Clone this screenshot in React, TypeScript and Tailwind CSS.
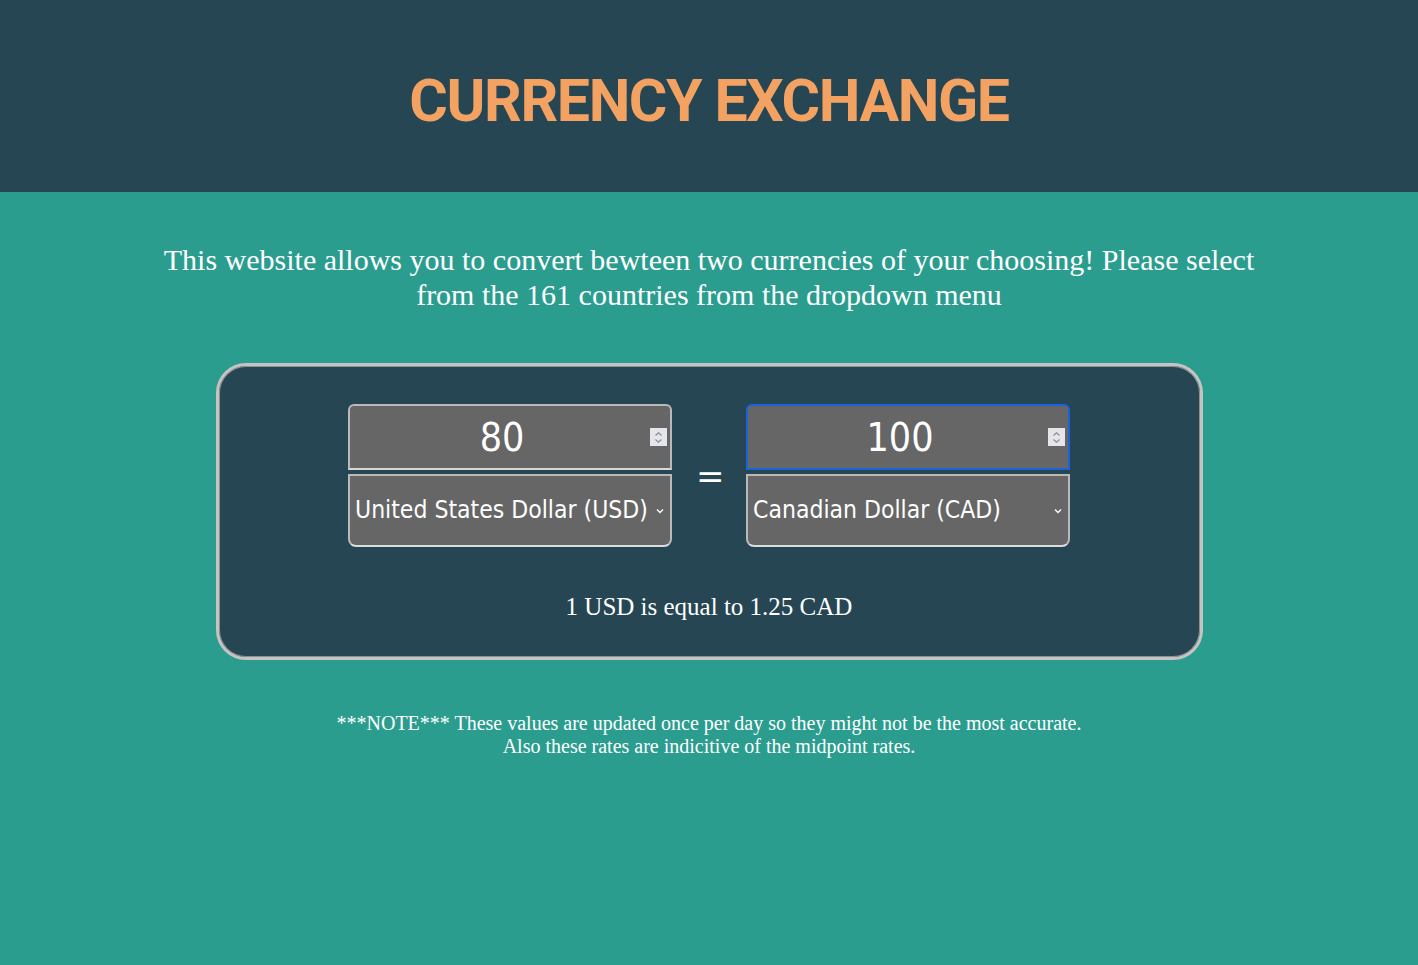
import { useState } from "react";

const currencies = [
  { code: "USD", name: "United States Dollar" },
  { code: "CAD", name: "Canadian Dollar" },
];

const Spinner = () => (
  <span className="absolute right-[3px] top-1/2 -translate-y-1/2 w-[17px] h-[18px] bg-[#e5e5ec] flex items-center justify-center pointer-events-none">
    <svg width="9" height="13" viewBox="0 0 9 13" fill="none" stroke="#8a8a96" strokeWidth="1.2">
      <path d="M1.5 4.5 L4.5 1.8 L7.5 4.5" />
      <path d="M1.5 8.5 L4.5 11.2 L7.5 8.5" />
    </svg>
  </span>
);

const Chevron = () => (
  <svg className="absolute right-[6px] top-1/2 -translate-y-1/2 pointer-events-none" width="8" height="6" viewBox="0 0 8 6" fill="none" stroke="#ffffff" strokeWidth="1.3">
    <path d="M1 1.5 L4 4.5 L7 1.5" />
  </svg>
);

const CurrencyBox = ({ amount, code, focused }: { amount: string; code: string; focused?: boolean }) => (
  <div className="flex flex-col w-[324px] gap-[4px]">
    <div className={`relative h-[66px] rounded-t-[6px] bg-[#666666] border-2 ${focused ? "border-[#1b63dd]" : "border-[#b9b9b9] border-b-[#d8d8d8]"}`}>
      <input
        readOnly
        value={amount}
        className="w-full h-full bg-transparent text-center text-white text-[39px] outline-none font-['DejaVu_Sans_Condensed','DejaVu_Sans',sans-serif] pr-[16px]"
      />
      <Spinner />
    </div>
    <div className="relative h-[73px] rounded-b-[8px] bg-[#666666] border-2 border-[#b9b9b9] border-b-[#dcdcdc]">
      <select
        defaultValue={code}
        className="appearance-none w-full h-full bg-transparent text-white text-[24.5px] pl-[5px] outline-none font-['DejaVu_Sans_Condensed','DejaVu_Sans',sans-serif]"
      >
        {currencies.map((c) => (
          <option key={c.code} value={c.code} className="bg-[#666666]">
            {c.name} ({c.code})
          </option>
        ))}
      </select>
      <Chevron />
    </div>
  </div>
);

export default function App() {
  const [from] = useState("USD");
  const [to] = useState("CAD");

  return (
    <div className="min-h-[965px] bg-[#2a9d8f] font-['Liberation_Serif',serif] text-white">
      <header className="h-[192px] bg-[#264653] flex items-center justify-center">
        <h1 className="text-[#f4a261] text-[59px] font-bold tracking-[-1.4px] leading-none pt-[8px] font-['Roboto',sans-serif]">
          CURRENCY EXCHANGE
        </h1>
      </header>

      <p className="mt-[50px] text-center text-[30px] leading-[35px] max-w-[1120px] mx-auto">
        This website allows you to convert bewteen two currencies of your choosing! Please select from the 161 countries from the dropdown menu
      </p>

      <section className="mt-[51px] mx-auto w-[987px] h-[297px] rounded-[30px] bg-[#264653] border-[3px] border-[#c4c4c4] shadow-[inset_0_0_0_1px_#8f8f8f] flex flex-col items-center pt-[38px]">
        <div className="flex items-center gap-[24px]">
          <CurrencyBox amount="80" code={from} />
          <span className="text-[34px] font-['DejaVu_Sans',sans-serif] leading-none w-[26px] text-center">=</span>
          <CurrencyBox amount="100" code={to} focused />
        </div>
        <p className="mt-[41px] text-[25px]">1 {from} is equal to 1.25 {to}</p>
      </section>

      <p className="mt-[52px] text-center text-[20px] leading-[23px]">
        ***NOTE*** These values are updated once per day so they might not be the most accurate.
        <br />
        Also these rates are indicitive of the midpoint rates.
      </p>
    </div>
  );
}
